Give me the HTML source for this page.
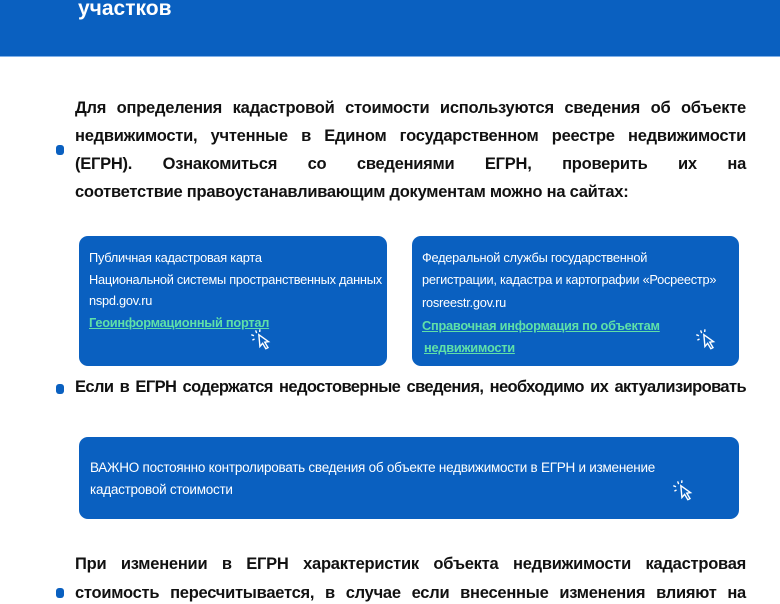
<!DOCTYPE html>
<html><head><meta charset="utf-8"><style>
body{margin:0;width:780px;height:600px;overflow:hidden;background:#fff;font-family:"Liberation Sans",sans-serif;position:relative}
.hdr{position:absolute;left:0;top:0;width:780px;height:56px;background:#0a60c0;border-bottom:1px solid #7fb0e8}
.hdr span{position:absolute;left:78px;top:-3px;color:#fff;font-weight:bold;font-size:21px}
.ln{position:absolute;left:75px;width:671px;font-weight:bold;color:#111;font-size:16.5px;letter-spacing:-0.25px;text-align:justify;text-align-last:justify;white-space:nowrap;height:20px}
.ln.e{text-align-last:left}
.b{position:absolute;width:8px;height:10px;border-radius:3px;background:#0a60c0}
.card{position:absolute;background:#0a60c0;border-radius:9px;color:#fff;font-size:12.8px;letter-spacing:-0.25px}
.card div{position:absolute;white-space:nowrap}
.l{color:#5fe0a8;text-decoration:underline;font-weight:bold}
svg{position:absolute}
</style></head><body>
<div class="hdr"><span>участков</span></div>
<div class="b" style="left:56px;top:145px"></div>
<div class="ln" style="top:99px">Для определения кадастровой стоимости используются сведения об объекте</div>
<div class="ln" style="top:127px">недвижимости, учтенные в Едином государственном реестре недвижимости</div>
<div class="ln" style="top:155px">(ЕГРН). Ознакомиться со сведениями ЕГРН, проверить их на</div>
<div class="ln e" style="top:183px">соответствие правоустанавливающим документам можно на сайтах:</div>

<div class="card" style="left:79px;top:236px;width:308px;height:130px">
<div style="left:10px;top:14px">Публичная кадастровая карта</div>
<div style="left:10px;top:36px">Национальной системы пространственных данных</div>
<div style="left:10px;top:57px">nspd.gov.ru</div>
<div class="l" style="left:10px;top:79px">Геоинформационный портал</div>
<svg style="left:168px;top:92px" width="28" height="22" viewBox="0 0 26 20" fill="none" stroke="#fff" stroke-width="1.3"><path d="M11 6 L12 17 L14.5 14 L17.5 19 L19.5 18 L16.5 13 L20 12.5 Z"/><path d="M8 2 L9 4.5 M4 6 L6.5 7 M5 11 L7 10 M12 1 L11.8 3.5"/></svg>
</div>
<div class="card" style="left:412px;top:236px;width:327px;height:130px">
<div style="left:10px;top:14px">Федеральной службы государственной</div>
<div style="left:10px;top:36px">регистрации, кадастра и картографии «Росреестр»</div>
<div style="left:10px;top:59px">rosreestr.gov.ru</div>
<div class="l" style="left:10px;top:82px">Справочная информация по объектам</div>
<div class="l" style="left:12px;top:104px">недвижимости</div>
<svg style="left:280px;top:92px" width="28" height="22" viewBox="0 0 26 20" fill="none" stroke="#fff" stroke-width="1.3"><path d="M11 6 L12 17 L14.5 14 L17.5 19 L19.5 18 L16.5 13 L20 12.5 Z"/><path d="M8 2 L9 4.5 M4 6 L6.5 7 M5 11 L7 10 M12 1 L11.8 3.5"/></svg>
</div>

<div class="b" style="left:56px;top:384px"></div>
<div class="ln" style="top:378px;letter-spacing:-0.6px">Если в ЕГРН содержатся недостоверные сведения, необходимо их актуализировать</div>

<div class="card" style="left:79px;top:437px;width:660px;height:82px;font-size:13.5px">
<div style="left:11px;top:23px">ВАЖНО постоянно контролировать сведения об объекте недвижимости в ЕГРН и изменение</div>
<div style="left:11px;top:45px">кадастровой стоимости</div>
<svg style="left:590px;top:42px" width="28" height="22" viewBox="0 0 26 20" fill="none" stroke="#fff" stroke-width="1.3"><path d="M11 6 L12 17 L14.5 14 L17.5 19 L19.5 18 L16.5 13 L20 12.5 Z"/><path d="M8 2 L9 4.5 M4 6 L6.5 7 M5 11 L7 10 M12 1 L11.8 3.5"/></svg>
</div>

<div class="b" style="left:56px;top:588px"></div>
<div class="ln" style="top:555px">При изменении в ЕГРН характеристик объекта недвижимости кадастровая</div>
<div class="ln" style="top:584px">стоимость пересчитывается, в случае если внесенные изменения влияют на</div>
</body></html>
